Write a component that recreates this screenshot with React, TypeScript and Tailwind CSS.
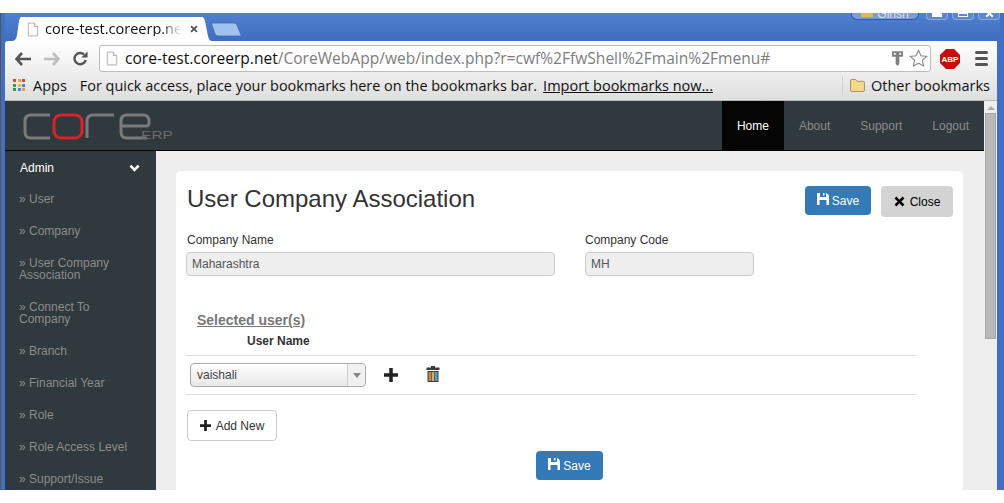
import React, { FC } from 'react';

const sans = "font-['Liberation_Sans',Arial,sans-serif]";
const chrome = "font-['Open_Sans','Noto_Sans',sans-serif]";

const menuItems = [
  'User',
  'Company',
  'User Company Association',
  'Connect To Company',
  'Branch',
  'Financial Year',
  'Role',
  'Role Access Level',
  'Support/Issue',
];

const SaveIcon: FC<{ className?: string }> = ({ className }) => (
  <svg viewBox="0 0 12 12" className={className} fill="currentColor">
    <path fillRule="evenodd" d="M0 0h9.5L12 2.5V12H0zM3 0v4h6V0H7.5v2.6H6V0zM2.5 7v5h7V7z" />
  </svg>
);

const PlusIcon: FC<{ className?: string }> = ({ className }) => (
  <svg viewBox="0 0 12 12" className={className} fill="currentColor">
    <path d="M4.5 0h3v4.5H12v3H7.5V12h-3V7.5H0v-3h4.5z" />
  </svg>
);

const CloseIcon: FC<{ className?: string }> = ({ className }) => (
  <svg viewBox="0 0 12 12" className={className} fill="currentColor">
    <path d="M2.6.6 6 4l3.400-3.400 2 2L8 6l3.400 3.400-2 2L6 8l-3.400 3.400-2-2L4 6 .6 2.600z" />
  </svg>
);

const PageIcon: FC<{ className?: string }> = ({ className }) => (
  <svg viewBox="0 0 14 16" className={className}>
    <path d="M1.500.5h7l4 4v11h-11z" fill="#fafafa" stroke="#a9a9a9" />
    <path d="M8.500.5v4h4" fill="#e8e8e8" stroke="#a9a9a9" />
  </svg>
);

const TrashIcon: FC = () => (
  <svg viewBox="0 0 14 16" className="w-[14px] h-4">
    <path d="M5 0h4v1.500h4.500V4H.5V1.500H5z" fill="#3a3a3a" />
    <rect x="1.500" y="5" width="11" height="11" fill="#3a3a3a" />
    <rect x="2.500" y="6" width="2.600" height="9" fill="#c9843a" />
    <rect x="5.700" y="6" width="2.600" height="9" fill="#c9b27a" />
    <rect x="8.900" y="6" width="2.600" height="9" fill="#5d9bc4" />
  </svg>
);

const Logo: FC = () => (
  <svg viewBox="0 0 152 30" className="w-[152px] h-[30px] ml-[18px] mt-[12px] self-start">
    <g fill="none" strokeWidth="3" stroke="#7a7a7a">
      <path d="M27 2H8Q2 2 2 8v11q0 6 6 6h19" />
      <rect x="31" y="2" width="28" height="23" rx="7" stroke="#d8232a" />
      <path d="M64 25V8q0-6 6-6h21" />
      <path d="M124 25h-20q-6 0-6-6V8q0-6 6-6h16q6 0 6 6v2q0 3-3 3H98" />
    </g>
    <text x="118" y="26" fontSize="11.500" fill="#6b6b6b" fontFamily="Liberation Sans" textLength="32" lengthAdjust="spacingAndGlyphs">
      ERP
    </text>
  </svg>
);

const App: FC = () => {
  return (
    <div className={`h-[503px] w-[1004px] overflow-hidden bg-white pt-[13px] ${sans}`}>
      <div className="h-[477px] flex flex-col bg-[#4070c4] border-l border-l-[#555] pl-1 pr-1">
        {/* tab strip */}
        <div className="h-[28px] shrink-0 flex items-start bg-gradient-to-b from-[#5080d0] to-[#3f6ec0]">
          <div className="flex items-end h-full pt-1 pl-[7px]">
            <svg viewBox="0 0 9 24" className="w-[9px] h-6">
              <path d="M0 24q4 0 5-6L7 4q1-4 2-4v24z" fill="#fff" />
            </svg>
            <div className={`w-[181px] h-6 bg-white flex items-center text-[14.500px] text-[#111] ${chrome}`}>
              <PageIcon className="w-[12px] h-[15px] ml-[6px] mr-[6px] shrink-0" />
              <span className="w-[137px] shrink-0 overflow-hidden whitespace-nowrap leading-none [mask-image:linear-gradient(to_right,black_85%,transparent)]">
                core-test.coreerp.net
              </span>
              <CloseIcon className="w-2 h-2 ml-[8px] shrink-0 text-[#555]" />
            </div>
            <svg viewBox="0 0 10 24" className="w-[10px] h-6">
              <path d="M0 0q2 0 3 4l3 15q1 5 4 5H0z" fill="#fff" />
            </svg>
          </div>
          <svg viewBox="0 0 31 15" className="w-[31px] h-[15px] mt-[9px] -ml-[1px]">
            <path d="M1 1h22q2 0 3 2l4 10q.5 1-1 1H7q-2 0-3-2L1 3Q.5 1 1 1z" fill="#a2c2ee" stroke="#3d63a8" strokeWidth=".7" />
          </svg>
          <div className="ml-auto flex gap-1 items-start">
            <div className="w-[68px] h-[7px] overflow-hidden rounded-b-md border border-t-0 border-[#2f5aa5] bg-[#7c9ed8] flex justify-center gap-1 mr-[3px]">
              <span className="w-3 h-[4px] bg-[#e5b84a] mt-0" />
              <span className="text-[12px] leading-none -mt-[5px] text-[#ddd]">Girish</span>
            </div>
            <div className="w-[22px] h-[7px] rounded-b-sm border border-t-0 border-[#8aa8de] bg-[#5b86d2] flex justify-center">
              <span className="w-[10px] h-[4px] bg-white" />
            </div>
            <div className="w-[22px] h-[7px] rounded-b-sm border border-t-0 border-[#8aa8de] bg-[#5b86d2] flex justify-center">
              <span className="w-[10px] h-[4px] border border-white" />
            </div>
            <div className="w-[22px] h-[7px] rounded-b-sm border border-t-0 border-[#8aa8de] bg-[#5b86d2] overflow-hidden flex justify-center">
              <CloseIcon className="w-[9px] h-[9px] -mt-1 text-white" />
            </div>
          </div>
        </div>

        {/* toolbar */}
        <div className="h-[35px] shrink-0 flex items-center bg-gradient-to-b from-white to-[#ececec] rounded-tl-[3px] mr-[3px]">
          <svg viewBox="0 0 16 14" className="w-4 h-[14px] ml-[10px] text-[#555]">
            <path d="M7 1 1.500 7 7 13M2 7h14" fill="none" stroke="currentColor" strokeWidth="2.600" />
          </svg>
          <svg viewBox="0 0 16 14" className="w-4 h-[14px] ml-[13px] text-[#bdbdbd]">
            <path d="M9 1l5.500 6L9 13M14 7H0" fill="none" stroke="currentColor" strokeWidth="2.600" />
          </svg>
          <svg viewBox="0 0 16 16" className="w-[15px] h-[15px] ml-[13px] text-[#555]">
            <path d="M13.500 9.500A6 6 0 1 1 12 4" fill="none" stroke="currentColor" strokeWidth="2.600" />
            <path d="M15.500.5v6.500H9z" fill="currentColor" />
          </svg>
          <div className="ml-[11px] w-[832px] h-[27px] bg-white border border-[#bcbcbc] rounded-[3px] flex items-center">
            <PageIcon className="w-[12px] h-[15px] ml-[6px] mr-[7px] shrink-0" />
            <span className={`text-[15.570px] whitespace-nowrap leading-none ${chrome}`}>
              <span className="text-[#111]">core-test.coreerp.net</span>
              <span className="text-[#7d7d7d]">/CoreWebApp/web/index.php?r=cwf%2FfwShell%2Fmain%2Fmenu#</span>
            </span>
            <svg viewBox="0 0 12 16" className="ml-auto w-[11px] h-[15px] text-[#808080]">
              <path fillRule="evenodd" d="M0 0h12v6H8v8l-2 2-2-2V6H0zM2 2v2h2V2zM8 2v2h2V2z" fill="currentColor" />
            </svg>
            <svg viewBox="0 0 20 20" className="w-[19px] h-[19px] ml-[6px] mr-[2px]">
              <path d="M10 1.500l2.600 5.600 6 .7-4.500 4.100 1.200 6L10 15l-5.300 2.900 1.200-6L1.400 7.800l6-.7z" fill="#fff" stroke="#8d8d8d" strokeWidth="1.200" />
            </svg>
          </div>
          <svg viewBox="0 0 20 20" className="w-5 h-5 ml-[9px]">
            <path d="M6 0h8l6 6v8l-6 6H6l-6-6V6z" fill="#c70d0d" />
            <text x="10" y="13" textAnchor="middle" fontSize="8" fontWeight="700" fill="#fff" fontFamily="Liberation Sans">ABP</text>
          </svg>
          <div className="ml-[15px] flex flex-col gap-[3px]">
            <span className="block w-[13px] h-[3px] rounded-sm bg-[#555]" />
            <span className="block w-[13px] h-[3px] rounded-sm bg-[#555]" />
            <span className="block w-[13px] h-[3px] rounded-sm bg-[#555]" />
          </div>
        </div>

        {/* bookmarks bar */}
        <div className={`h-[25px] shrink-0 flex items-center pb-[5px] bg-gradient-to-b from-[#ececec] to-[#dedede] border-b border-[#b8b8b8] mr-[3px] text-[14.500px] text-[#111] ${chrome}`}>
          <div className="grid grid-cols-3 gap-[1px] w-[13px] h-[13px] ml-2 mr-[7px]">
            {['#d9473b', '#e8a33c', '#d9473b', '#3c9b4a', '#e8c23c', '#4285f4', '#3c9b4a', '#4285f4', '#e8a33c'].map((c, i) => (
              <span key={i} className="block w-[3px] h-[3px]" style={{ background: c }} />
            ))}
          </div>
          <span>Apps</span>
          <span className="ml-[13px] text-[14.450px]">For quick access, place your bookmarks here on the bookmarks bar.</span>
          <span className="ml-[6px] underline">Import bookmarks now...</span>
          <span className="ml-auto h-full border-l border-[#cfcfcf]" />
          <svg viewBox="0 0 16 14" className="w-[15px] h-[13px] ml-[7px] mr-[6px]">
            <path d="M.5 2q0-1.500 1.500-1.500h4L7.500 2.500H14q1.500 0 1.500 1.500v8q0 1.500-1.500 1.500H2Q.5 13.500.5 12z" fill="#f7d78a" stroke="#a38b58" />
          </svg>
          <span className="mr-[7px]">Other bookmarks</span>
        </div>

        {/* page + scrollbar */}
        <div className="flex-1 min-h-0 flex bg-[#eee] mr-[3px]">
          <div className="w-[979px] flex flex-col min-w-0">
            <div className="h-[50px] shrink-0 flex items-stretch bg-[#2f393e] border-b border-black text-[12px]">
              <Logo />
              <div className="ml-auto flex items-stretch">
                <a className="px-[15px] bg-[#050505] text-white flex items-center">Home</a>
                <a className="px-[15px] text-[#8c8c8c] flex items-center">About</a>
                <a className="px-[15px] text-[#8c8c8c] flex items-center">Support</a>
                <a className="pl-[15px] pr-[15px] text-[#8c8c8c] flex items-center">Logout</a>
              </div>
            </div>
            <div className="flex-1 min-h-0 flex overflow-hidden">
              <aside className="w-[151px] shrink-0 bg-[#2f393e] text-[12px] leading-3 text-[#8c8c8c]">
                <div className="h-[32px] pt-[1px] flex items-center justify-between pl-[15px] pr-[16px] text-white">
                  <span>Admin</span>
                  <svg viewBox="0 0 12 8" className="w-[11px] h-2 text-white">
                    <path d="M1.500 1.500 6 6l4.500-4.500" fill="none" stroke="currentColor" strokeWidth="2.800" />
                  </svg>
                </div>
                {menuItems.map((item) => (
                  <div key={item} className="py-[10px] pl-[14px] pr-[25px]">
                    » {item}
                  </div>
                ))}
              </aside>
              <main className="flex-1 min-w-0 pt-5 pl-5 pr-[21px]">
                <div className="bg-white rounded-t-[5px] h-[340px] pt-[15px] px-[10px] text-[12px] text-[#333]">
                  <div className="flex items-start justify-between">
                    <h3 className="text-[24px] leading-[26px] pl-[1px]">User Company Association</h3>
                    <div className="flex gap-[10px] items-start">
                      <button className="w-[66px] h-[29px] rounded bg-[#337ab7] text-white flex items-center justify-center gap-[3px]">
                        <SaveIcon className="w-[12px] h-[12px] -mt-[3px]" />
                        Save
                      </button>
                      <button className="w-[72px] h-[31px] rounded bg-[#d3d3d3] text-black flex items-center justify-center gap-[5px]">
                        <CloseIcon className="w-[11px] h-[11px] -mt-[1px]" />
                        Close
                      </button>
                    </div>
                  </div>
                  <div className="flex mt-[17px]">
                    <div className="w-[399px]">
                      <div className="leading-[13px] mb-[5px] pl-[1px]">Company Name</div>
                      <div className="w-[369px] h-[24px] bg-[#eee] border border-[#ccc] rounded flex items-center pl-[5px] text-[#555]">Maharashtra</div>
                    </div>
                    <div>
                      <div className="leading-[13px] mb-[5px]">Company Code</div>
                      <div className="w-[169px] h-[24px] bg-[#eee] border border-[#ccc] rounded flex items-center pl-[5px] text-[#555]">MH</div>
                    </div>
                  </div>
                  <div className="mt-[36px] pl-[11px] text-[14px] font-bold text-[#777] underline leading-4">Selected user(s)</div>
                  <div className="mt-[7px] pl-[61px] font-bold leading-[13px]">User Name</div>
                  <div className="w-[730px] mt-[7px] border-t border-[#ddd] border-b h-[40px] flex items-center">
                    <div className="ml-1 w-[176px] h-[24px] rounded border border-[#aaa] bg-gradient-to-b from-white to-[#e8e8e8] flex items-center text-[#444]">
                      <span className="pl-[6px] flex-1">vaishali</span>
                      <span className="w-[18px] h-full border-l border-[#ccc] bg-[#f1f1f1] rounded-r flex items-center justify-center">
                        <span className="border-x-[4px] border-x-transparent border-t-[5px] border-t-[#888]" />
                      </span>
                    </div>
                    <PlusIcon className="w-[14px] h-[14px] ml-[18px] text-[#222]" />
                    <span className="ml-[28px] -mt-[2px] flex"><TrashIcon /></span>
                  </div>
                  <button className="mt-[15px] w-[90px] h-[31px] ml-[1px] bg-white border border-[#ccc] rounded flex items-center justify-center gap-[5px]">
                    <PlusIcon className="w-[11px] h-[11px] text-[#222]" />
                    Add New
                  </button>
                  <div className="flex justify-center mt-[10px]">
                    <button className="w-[67px] h-[29px] rounded bg-[#337ab7] text-white flex items-center justify-center gap-[3px]">
                      <SaveIcon className="w-[12px] h-[12px] -mt-[3px]" />
                      Save
                    </button>
                  </div>
                </div>
              </main>
            </div>
          </div>
          <div className="flex-1 flex flex-col items-center pt-[5px]">
            <span className="border-x-[4px] border-x-transparent border-b-[4px] border-b-[#aaa] mb-[3px]" />
            <span className="w-[11px] h-[226px] bg-[#b9b9b9] border border-[#a8a8a8]" />
          </div>
        </div>
      </div>
    </div>
  );
};

export default App;
